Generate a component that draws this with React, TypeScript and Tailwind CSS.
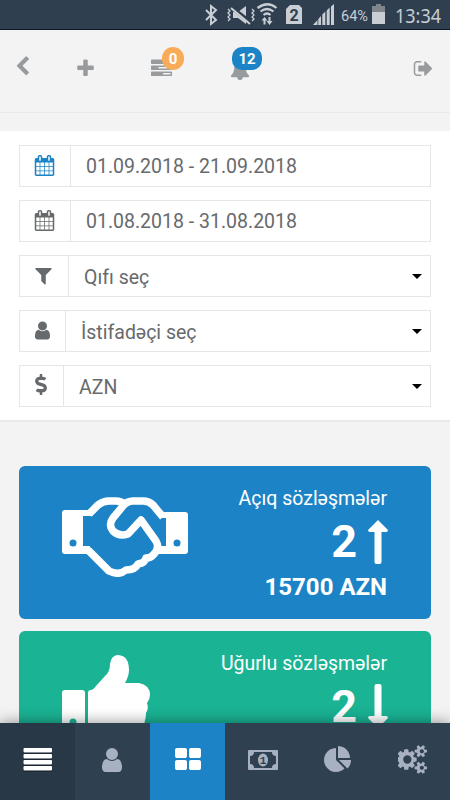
import { FC, ReactNode } from "react";
import { FaDollarSign } from "react-icons/fa";

interface IconProps {
  d: string;
  className?: string;
  box?: string;
}

const Icon: FC<IconProps> = ({ d, className, box = "0 0 1792 1792" }) => (
  <svg viewBox={box} fill="currentColor" className={className}><path d={d} /></svg>
);

const paths = {
  chevron: "M1427 301l-531 531 531 531q19 19 19 45t-19 45l-166 166q-19 19-45 19t-45-19l-742-742q-19-19-19-45t19-45l742-742q19-19 45-19t45 19l166 166q19 19 19 45t-19 45z",
  plus: "M1600 736v192q0 40-28 68t-68 28h-416v416q0 40-28 68t-68 28h-192q-40 0-68-28t-28-68v-416h-416q-40 0-68-28t-28-68v-192q0-40 28-68t68-28h416v-416q0-40 28-68t68-28h192q40 0 68 28t28 68v416h416q40 0 68 28t28 68z",
  tasks: "M1024 1408h640v-128h-640v128zm-384-512h1024v-128h-1024v128zm640-512h384v-128h-384v128zm512 832v256q0 26-19 45t-45 19h-1664q-26 0-45-19t-19-45v-256q0-26 19-45t45-19h1664q26 0 45 19t19 45zm0-512v256q0 26-19 45t-45 19h-1664q-26 0-45-19t-19-45v-256q0-26 19-45t45-19h1664q26 0 45 19t19 45zm0-512v256q0 26-19 45t-45 19h-1664q-26 0-45-19t-19-45v-256q0-26 19-45t45-19h1664q26 0 45 19t19 45z",
  bell: "M1728 1408q0 52-38 90t-90 38h-448q0 106-75 181t-181 75-181-75-75-181h-448q-52 0-90-38t-38-90q50-42 91-88t85-119.500 74.500-158.500 50-206 19.500-260q0-152 117-282.500t307-158.500q-8-19-8-39 0-40 28-68t68-28 68 28 28 68q0 20-8 39 190 28 307 158.500t117 282.500q0 139 19.500 260t50 206 74.500 158.500 85 119.500 91 88z",
  signOut: "M704 1440q0 4 1 20t.5 26.500-3 23.500-10 19.500-20.500 6.500h-320q-119 0-203.500-84.500t-84.500-203.500v-704q0-119 84.500-203.500t203.500-84.500h320q13 0 22.500 9.500t9.500 22.500q0 4 1 20t.5 26.500-3 23.500-10 19.500-20.500 6.500h-320q-66 0-113 47t-47 113v704q0 66 47 113t113 47h312l11.500 1 11.500 3 8 5.500 7 9 2 13.500zm928-544q0 26-19 45l-544 544q-19 19-45 19t-45-19-19-45v-288h-448q-26 0-45-19t-19-45v-384q0-26 19-45t45-19h448v-288q0-26 19-45t45-19 45 19l544 544q19 19 19 45z",
  calendar: "M192 1664h288v-288h-288v288zm352 0h320v-288h-320v288zm-352-352h288v-320h-288v320zm352 0h320v-320h-320v320zm-352-384h288v-288h-288v288zm736 736h320v-288h-320v288zm-384-736h320v-288h-320v288zm768 736h288v-288h-288v288zm-384-352h320v-320h-320v320zm-352-864v-288q0-13-9.500-22.500t-22.500-9.500h-64q-13 0-22.500 9.500t-9.500 22.500v288q0 13 9.500 22.500t22.500 9.500h64q13 0 22.500-9.500t9.500-22.500zm736 864h288v-320h-288v320zm-384-384h320v-288h-320v288zm384 0h288v-288h-288v288zm32-480v-288q0-13-9.500-22.500t-22.500-9.500h-64q-13 0-22.500 9.500t-9.500 22.500v288q0 13 9.500 22.500t22.500 9.500h64q13 0 22.500-9.500t9.500-22.500zm384-64v1280q0 52-38 90t-90 38h-1408q-52 0-90-38t-38-90v-1280q0-52 38-90t90-38h128v-96q0-66 47-113t113-47h64q66 0 113 47t47 113v96h384v-96q0-66 47-113t113-47h64q66 0 113 47t47 113v96h128q52 0 90 38t38 90z",
  filter: "M1595 295q17 41-14 70l-493 493v742q0 42-39 59-13 5-25 5-27 0-45-19l-256-256q-19-19-19-45v-486l-493-493q-31-29-14-70 17-39 59-39h1280q42 0 59 39z",
  user: "M1536 1399q0 109-62.500 187t-150.500 78h-854q-88 0-150.500-78t-62.500-187q0-85 8.500-160.500t31.500-152 58.500-131 94-89 134.500-34.500q131 128 313 128t313-128q76 0 134.500 34.500t94 89 58.500 131 31.500 152 8.500 160.500zm-256-887q0 159-112.500 271.500t-271.500 112.500-271.500-112.500-112.500-271.500 112.500-271.500 271.500-112.500 271.500 112.500 112.500 271.500z",
  grid: "M832 1024v384q0 52-38 90t-90 38h-512q-52 0-90-38t-38-90v-384q0-52 38-90t90-38h512q52 0 90 38t38 90zm0-768v384q0 52-38 90t-90 38h-512q-52 0-90-38t-38-90v-384q0-52 38-90t90-38h512q52 0 90 38t38 90zm896 768v384q0 52-38 90t-90 38h-512q-52 0-90-38t-38-90v-384q0-52 38-90t90-38h512q52 0 90 38t38 90zm0-768v384q0 52-38 90t-90 38h-512q-52 0-90-38t-38-90v-384q0-52 38-90t90-38h512q52 0 90 38t38 90z",
  pie: "M768 890l546 546q-106 108-247.500 168t-298.500 60q-209 0-385.500-103t-279.500-279.500-103-385.500 103-385.500 279.500-279.500 385.500-103v762zm187 6h773q0 157-60 298.500t-168 247.500zm709-128h-768v-768q209 0 385.500 103t279.500 279.500 103 385.500z",
  cogs: "M832 896q0-106-75-181t-181-75-181 75-75 181 75 181 181 75 181-75 75-181zm768 512q0-52-38-90t-90-38-90 38-38 90q0 53 37.500 90.500t90.500 37.500 90.500-37.500 37.500-90.500zm0-1024q0-52-38-90t-90-38-90 38-38 90q0 53 37.500 90.500t90.500 37.500 90.500-37.500 37.500-90.500zm-448 421v185q0 10-7 19.500t-16 10.500l-155 24q-11 35-32 76 34 48 90 115 7 11 7 20 0 12-7 19-23 30-82.500 89.500t-78.500 59.500q-11 0-21-7l-115-90q-37 19-77 31-11 108-23 155-7 24-30 24h-186q-11 0-20-7.500t-10-17.500l-23-153q-34-10-75-31l-118 89q-7 7-20 7-11 0-21-8-144-133-144-160 0-9 7-19 10-14 41-53t47-61q-23-44-35-82l-152-24q-10-1-17-9.500t-7-19.500v-185q0-10 7-19.500t16-10.500l155-24q11-35 32-76-34-48-90-115-7-11-7-20 0-12 7-20 22-30 82-89t79-59q11 0 21 7l115 90q34-18 77-32 11-108 23-154 7-24 30-24h186q11 0 20 7.500t10 17.500l23 153q34 10 75 31l118-89q8-7 20-7 11 0 21 8 144 133 144 160 0 8-7 19-12 16-42 54t-45 60q23 48 34 82l152 23q10 2 17 10.500t7 19.500zm640 533v140q0 16-149 31-12 27-30 52 51 113 51 138 0 4-4 7-122 71-124 71-8 0-46-47t-52-68q-20 2-30 2t-30-2q-14 21-52 68t-46 47q-2 0-124-71-4-3-4-7 0-25 51-138-18-25-30-52-149-15-149-31v-140q0-16 149-31 13-29 30-52-51-113-51-138 0-4 4-7 4-2 35-20t59-34 30-16q8 0 46 46.500t52 67.500q20-2 30-2t30 2q51-71 92-112l6-2q4 0 124 70 4 3 4 7 0 25-51 138 17 23 30 52 149 15 149 31zm0-1024v140q0 16-149 31-12 27-30 52 51 113 51 138 0 4-4 7-122 71-124 71-8 0-46-47t-52-68q-20 2-30 2t-30-2q-14 21-52 68t-46 47q-2 0-124-71-4-3-4-7 0-25 51-138-18-25-30-52-149-15-149-31v-140q0-16 149-31 13-29 30-52-51-113-51-138 0-4 4-7 4-2 35-20t59-34 30-16q8 0 46 46.500t52 67.500q20-2 30-2t30 2q51-71 92-112l6-2q4 0 124 70 4 3 4 7 0 25-51 138 17 23 30 52 149 15 149 31z",
};

const StatusBar: FC = () => (
  <div className="flex h-[30px] shrink-0 items-center border-b border-[#101827] bg-[#2f3f50] pl-[204px] text-[#c8ced3]">
    <svg viewBox="0 0 246 30" className="h-[30px] w-[246px] shrink-0" fill="currentColor">
      <path d="M2 10l10 10-5 4V6l5 4L2 20" fill="none" stroke="currentColor" strokeWidth="2" />
      <path d="M29 12h5l8-6v18l-8-6h-5z" />
      <path d="M27 7l22 17" stroke="#2f3f50" strokeWidth="4" />
      <path d="M27 8l19 16" stroke="currentColor" strokeWidth="2" />
      <path d="M24 9l2 2-2 2 2 2-2 2 2 2-2 2M48 9l2 2-2 2 2 2-2 2 2 2-2 2" fill="none" stroke="currentColor" strokeWidth="1.300" />
      <path d="M53.500 8q10-7.500 19 0M56.500 11.500q6.500-5 13 0M59.500 15q3.500-3 7 0" fill="none" stroke="currentColor" strokeWidth="2.200" />
      <path d="M60.500 17l-3 3.500h2v4h2v-4h2zM65.500 25l3-4h-2v-4h-2v4h-2z" />
      <path d="M86 5h9l3 3v16H82V9z" />
      <path d="M109 25l4.500-5v5zM114.300 25v-6l2.700-3v9zM118.300 25V14.500l3-3V25zM122.700 25V10.500l3-3V25zM127 25V6.500l3-2.500v21z" />
      <path d="M172 4h5v2h-5zM168 6h13v6h-13z" className="text-[#7e858b]" />
      <path d="M168 12h13v12h-13z" />
      <text x="90" y="20.500" textAnchor="middle" fontSize="16" fontWeight="700" fill="#2f3f50">2</text>
      <text x="137" y="20.500" fontSize="14" textLength="27" lengthAdjust="spacingAndGlyphs">64%</text>
      <text x="191" y="22.500" fontSize="20" textLength="46" lengthAdjust="spacingAndGlyphs" className="font-['Noto_Sans']">13:34</text>
    </svg>
  </div>
);

const Header: FC = () => (
  <header className="flex h-[83px] shrink-0 items-start border-b border-[#e9e9e9] text-[#989b9e]">
    <Icon d={paths.chevron} className="mt-[26px] ml-3 h-[21px] w-[21px]" />
    <Icon d={paths.plus} className="mt-[28px] ml-[42px] h-[21px] w-[21px]" />
    <div className="relative mt-[28px] ml-[55px]">
      <Icon d={paths.tasks} className="h-[21px] w-[21px]" />
      <span className="absolute -top-[11px] left-[11px] flex h-[23px] w-[22px] items-center justify-center rounded-full bg-[#f8ac59] pt-px text-[15px] font-bold text-white">0</span>
    </div>
    <div className="relative mt-[30px] ml-[56px]">
      <Icon d={paths.bell} className="h-[20px] w-[24px]" />
      <span className="absolute -top-[13px] left-[4px] flex h-[23px] w-[30px] items-center justify-center rounded-[10px] bg-[#1c84c6] pt-px text-[15px] font-bold text-white">12</span>
    </div>
    <Icon d={paths.signOut} className="mt-[28px] ml-[161px] h-[21px] w-[21px]" />
  </header>
);

interface FieldProps {
  icon: ReactNode;
  iconBox: string;
  text: string;
  select?: boolean;
}

const Field: FC<FieldProps> = ({ icon, iconBox, text, select }) => (
  <div className="flex h-[42px] w-full items-center border border-[#e5e6e7] bg-white text-[19.5px] text-[#676a6c]">
    <div className={`flex h-full shrink-0 items-center border-r border-[#e5e6e7] pl-[15px] ${iconBox}`}>{icon}</div>
    <span className={select ? "flex-1 pt-[4px] pl-[15px]" : "flex-1 pt-[2px] pl-[15px]"}>{text}</span>
    {select && <span className="mr-[8px] h-0 w-0 border-x-5 border-t-5 border-x-transparent border-t-black" />}
  </div>
);

interface CardProps {
  title: string;
  color: string;
  down?: boolean;
  amount?: string;
  children: ReactNode;
}

const Card: FC<CardProps> = ({ title, color, down, amount, children }) => (
  <div className={`flex h-[153px] w-full shrink-0 justify-between rounded-[6px] pr-[43px] pl-[43px] text-white ${color}`}>
    {children}
    <div className="flex flex-col items-end pt-[20px]">
      <span className="pr-px text-[19.5px] leading-[26px]">{title}</span>
      <div className="flex h-[60px] items-start gap-[11px]">
        <span className="pt-[5px] text-[45px] leading-[50px] font-bold">2</span>
        <svg viewBox="0 0 20 45" className={down ? "mt-[6px] h-[45px] w-5 rotate-180" : "mt-[8px] h-[45px] w-5"} fill="currentColor">
          <path d="M10 0l10 10q0 2-2 2h-4.500v30q0 2-2 2h-3q-2 0-2-2V12H2q-2 0-2-2z" />
        </svg>
      </div>
      {amount && <span className="pr-px text-[24px] leading-[30px] font-bold">{amount}</span>}
    </div>
  </div>
);

const NavBar: FC = () => {
  const base = "flex h-full w-[75px] items-start justify-center pt-[24px]";
  return (
    <nav className="relative flex h-[77px] shrink-0 bg-[#2f4050] text-[#a7b1c2] shadow-[0_0_14px_rgba(0,0,0,0.45)]">
      <button className={`${base} bg-[#293846]`}>
        <svg viewBox="0 0 29 24" className="mt-px h-6 w-[29px]">
          {[0, 6, 12, 18].map((y) => (
            <g key={y}>
              <rect x="0.500" y={y + 1} width="28.500" height="4.500" rx="1" fill="#111820" />
              <rect x="0.500" y={y} width="28.500" height="4.500" rx="1" fill="white" />
            </g>
          ))}
        </svg>
      </button>
      <button className={base}><Icon d={paths.user} className="-mt-px mr-px h-[28px] w-[28px]" /></button>
      <button className={`${base} bg-[#1c84c6] text-white`}><Icon d={paths.grid} box="0 0 1792 1664" className="-mt-px h-[26px] w-[28px]" /></button>
      <button className={base}>
        <svg viewBox="0 0 30 20" className="mt-[3px] h-5 w-[30px]" fill="currentColor">
          <path fillRule="evenodd" d="M1 0h28q1 0 1 1v18q0 1-1 1H1q-1 0-1-1V1q0-1 1-1zM6 2q0 4-4 4v8q4 0 4 4h18q0-4 4-4V6q-4 0-4-4z" />
          <ellipse cx="15" cy="10" rx="5" ry="6.500" />
          <text x="15" y="14" textAnchor="middle" fontSize="11" fontWeight="700" fontFamily="Liberation Mono" fill="#2f4050">1</text>
        </svg>
      </button>
      <button className={base}><Icon d={paths.pie} className="-mt-px h-[28px] w-[28px]" /></button>
      <button className={base}><Icon d={paths.cogs} className="-mt-[2px] h-[29px] w-[29px]" /></button>
    </nav>
  );
};

const App: FC = () => (
  <div className="flex h-[800px] w-[450px] flex-col overflow-hidden bg-[#f3f3f4] font-['Roboto',sans-serif]">
    <StatusBar />
    <Header />
    <main className="flex min-h-0 flex-1 flex-col overflow-hidden pt-[18px]">
      <section className="flex h-[291px] shrink-0 flex-col gap-[13px] border-b-2 border-[#e7eaec] bg-white px-[19px] pt-[14px]">
        <Field icon={<Icon d={paths.calendar} className="-mt-[2px] -ml-px h-[21px] w-[21px] text-[#1c84c6]" />} iconBox="w-[51px]" text="01.09.2018 - 21.09.2018" />
        <Field icon={<Icon d={paths.calendar} className="-mt-[2px] -ml-px h-[21px] w-[21px]" />} iconBox="w-[51px]" text="01.08.2018 - 31.08.2018" />
        <Field icon={<Icon d={paths.filter} box="192 0 1408 1792" className="-mt-[2px] h-[21px] w-[17px]" />} iconBox="w-[49px]" text="Qıfı seç" select />
        <Field icon={<Icon d={paths.user} box="256 0 1280 1792" className="-mt-[2px] h-[21px] w-[15px]" />} iconBox="w-[46px]" text="İstifadəçi seç" select />
        <Field icon={<FaDollarSign className="-mt-[3px] h-[21px] w-[12px]" />} iconBox="w-[44px]" text="AZN" select />
      </section>
      <section className="flex flex-col gap-3 px-[19px] pt-[44px]">
        <Card title="Açıq sözləşmələr" color="bg-[#1c84c6]" amount="15700 AZN">
          <svg viewBox="0 0 126 80" className="mt-[31px] h-20 w-[126px]" fill="none">
            <path d="M3 13h27v6h-9v30h7v8H3q-3 0-3-3V16q0-3 3-3zM98 15h25q3 0 3 3v36q0 3-3 3H96v-8h8V21h-6z" fill="white" />
            <circle cx="11" cy="46" r="3.500" fill="#1c84c6" />
            <circle cx="115" cy="46" r="3.500" fill="#1c84c6" />
            <path d="M27 17L36 8Q41 4 47 4h7Q59 4 62 7M101 20L91 8Q87 4 81 4H71Q65 4 61 9L51 21Q46 28 51 34Q57 40 66 37L79 23L94 44Q98 51 92 57Q89 61 84 61Q83 66 76 67Q73 73 64 73Q57 79 47 74L26 53" stroke="white" strokeWidth="7.500" strokeLinejoin="round" />
          </svg>
        </Card>
        <Card title="Uğurlu sözləşmələr" color="bg-[#1ab394]" down>
          <svg viewBox="0 0 88 90" className="mt-[24px] h-[90px] w-[88px]" fill="white">
            <path d="M3 35h17q3 0 3 3v42H0V38q0-3 3-3z" />
            <circle cx="11" cy="67" r="3.500" fill="#1ab394" />
            <path d="M26 80V38q0-3 3-3 2 0 5-4l9-10q5-4 5-12 1-8 7-9 12 0 12 15 0 6-4 13h14q11 2 11 12 0 4-3 8 2 6-1 10 0 15-12 22z" />
          </svg>
        </Card>
      </section>
    </main>
    <NavBar />
  </div>
);

export default App;
